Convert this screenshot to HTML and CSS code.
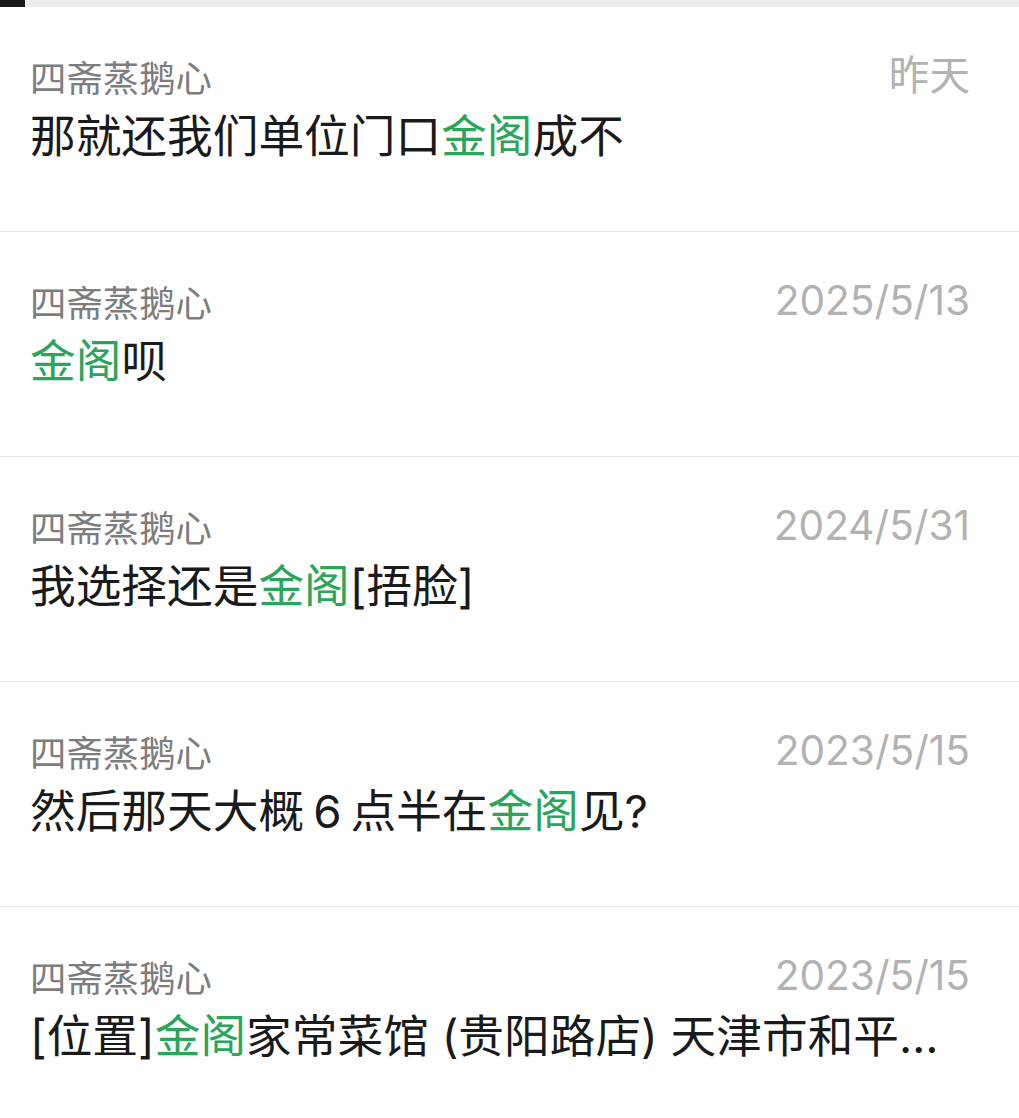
FILE: index.html
```html
<!DOCTYPE html>
<html lang="zh-CN">
<head>
<meta charset="utf-8">
<title>搜索结果</title>
<link rel="stylesheet" href="styles.css">
</head>
<body>
<div class="topbar"><div class="topbar-thumb"></div></div>
<ul class="list">
  <li class="row">
    <div class="head"><span class="name">四斋蒸鹅心</span><span class="date">昨天</span></div>
    <div class="msg">那就还我们单位门口<span class="hl">金阁</span>成不</div>
  </li>
  <li class="row">
    <div class="head"><span class="name">四斋蒸鹅心</span><span class="date">2025/5/13</span></div>
    <div class="msg"><span class="hl">金阁</span>呗</div>
  </li>
  <li class="row">
    <div class="head"><span class="name">四斋蒸鹅心</span><span class="date">2024/5/31</span></div>
    <div class="msg">我选择还是<span class="hl">金阁</span>[捂脸]</div>
  </li>
  <li class="row">
    <div class="head"><span class="name">四斋蒸鹅心</span><span class="date">2023/5/15</span></div>
    <div class="msg">然后那天大概<span class="num">6</span>点半在<span class="hl">金阁</span>见?</div>
  </li>
  <li class="row">
    <div class="head"><span class="name">四斋蒸鹅心</span><span class="date">2023/5/15</span></div>
    <div class="msg">[位置]<span class="hl">金阁</span>家常菜馆 (贵阳路店) 天津市和平…</div>
  </li>
</ul>
</body>
</html>
```
FILE: styles.css
```css
html, body {
  margin: 0;
  padding: 0;
  background: #ffffff;
}
body {
  font-family: Inter, "Noto Sans CJK SC", sans-serif;
  overflow: hidden;
}
.topbar {
  height: 7px;
  background: #ececec;
}
.topbar-thumb {
  width: 25px;
  height: 7px;
  background: #1a1a1a;
}
.list {
  list-style: none;
  margin: 0;
  padding: 0;
}
.row {
  height: 225px;
  box-sizing: border-box;
  padding: 47px 49px 0 30px;
  border-bottom: 1px solid #e3e3e3;
}
.head {
  display: flex;
  justify-content: space-between;
  align-items: center;
  height: 44px;
}
.name {
  font-family: "Noto Sans CJK SC", sans-serif;
  font-size: 36.4px;
  color: #7d7d7d;
  line-height: 44px;
}
.date {
  font-family: Inter, "Noto Sans CJK SC", sans-serif;
  font-size: 40.6px;
  color: #b2b2b2;
  line-height: 44px;
}
.msg {
  margin-top: 8px;
  font-family: Inter, "Noto Sans CJK SC", sans-serif;
  font-size: 45.7px;
  line-height: 62px;
  color: #1a1a1a;
  white-space: nowrap;
  overflow: hidden;
}
.num {
  padding: 0 9px;
}
.hl {
  color: #2ba55a;
}
```
